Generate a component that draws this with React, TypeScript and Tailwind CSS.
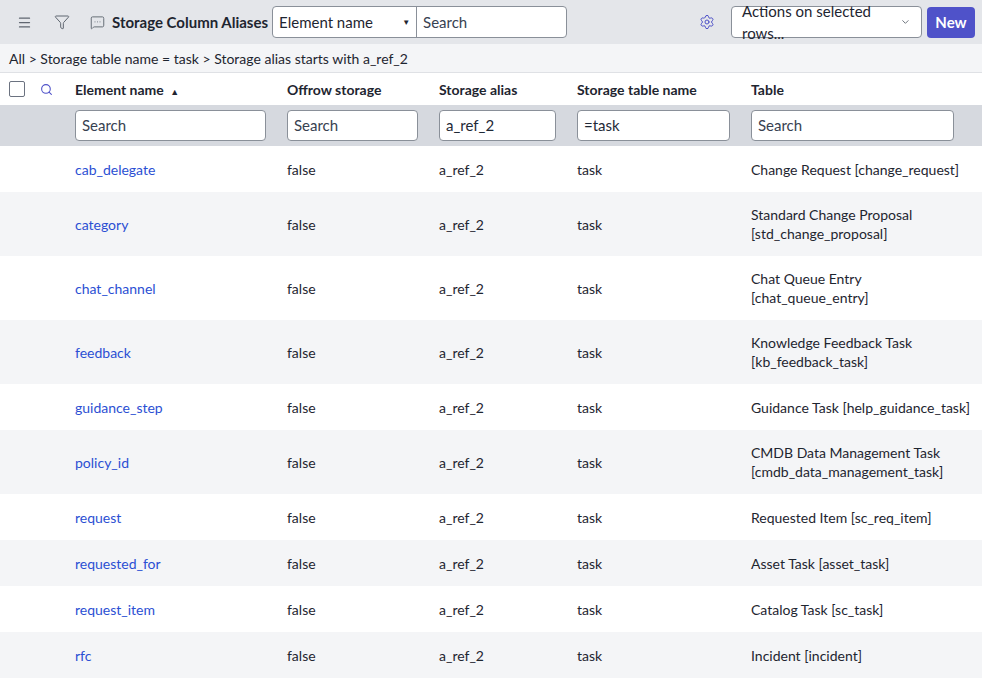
import { Menu, Filter, MessageSquareMore, Search, Settings, ChevronDown } from "lucide-react";

const rows: [string, string, string?][] = [
  ["cab_delegate", "Change Request [change_request]"],
  ["category", "Standard Change Proposal", "[std_change_proposal]"],
  ["chat_channel", "Chat Queue Entry", "[chat_queue_entry]"],
  ["feedback", "Knowledge Feedback Task", "[kb_feedback_task]"],
  ["guidance_step", "Guidance Task [help_guidance_task]"],
  ["policy_id", "CMDB Data Management Task", "[cmdb_data_management_task]"],
  ["request", "Requested Item [sc_req_item]"],
  ["requested_for", "Asset Task [asset_task]"],
  ["request_item", "Catalog Task [sc_task]"],
  ["rfc", "Incident [incident]"],
];

const grid = "grid grid-cols-[75px_212px_152px_138px_174px_1fr] items-center";

function FilterInput({ value, dark }: { value: string; dark?: boolean }) {
  return (
    <div className="pr-[21px]">
      <div className={`h-[31px] border border-[#8a9099] rounded-[4px] bg-white px-[6px] flex items-center text-[15px] ${dark ? "text-[#1f2937]" : "text-[#374151]"}`}>
        {value}
      </div>
    </div>
  );
}

export default function App() {
  return (
    <div className="w-[982px] h-[678px] overflow-hidden bg-white text-[#1e2530]" style={{ fontFamily: "Lato, 'Liberation Sans', sans-serif" }}>
      <div className="h-[44px] bg-[#e4e6ea] flex items-center pl-[17px] pr-[7px]">
        <Menu size={15} className="text-[#5f6670]" />
        <Filter size={16} className="ml-[22px] text-[#5f6670]" strokeWidth={1.5} />
        <MessageSquareMore size={15} className="ml-[20px] text-[#5f6670]" strokeWidth={1.5} />
        <span className="ml-[7px] font-bold text-[15px]">Storage Column Aliases</span>
        <div className="ml-[4px] flex h-[32px] border border-[#8a9099] rounded-[4px] bg-white text-[15px]">
          <div className="w-[144px] flex items-center justify-between px-[6px] border-r border-[#8a9099]">
            Element name <span className="text-[8px]">▼</span>
          </div>
          <div className="w-[149px] flex items-center px-[6px] text-[#374151]">Search</div>
        </div>
        <div className="flex-1" />
        <Settings size={16} className="text-[#4f52c9]" strokeWidth={1.5} />
        <div className="ml-[16px] w-[191px] h-[32px] border border-[#8a9099] rounded-[4px] bg-white flex items-center justify-between px-[10px] text-[15px]">
          Actions on selected rows... <ChevronDown size={12} className="text-[#5f6670]" />
        </div>
        <div className="ml-[5px] w-[48px] h-[31px] rounded-[4px] bg-[#4f52c9] text-white font-bold text-[15px] flex items-center justify-center">New</div>
      </div>
      <div className="h-[29px] bg-[#f4f5f7] flex items-center px-[9px] text-[14px] border-b border-[#dfe1e5]">
        All &gt; Storage table name = task &gt; Storage alias starts with a_ref_2
      </div>
      <div className={`${grid} h-[32px] font-bold text-[14px]`}>
        <div className="flex items-center pl-[9px] gap-[15px]">
          <div className="w-[16px] h-[16px] border border-[#6b7280] rounded-[2px]" />
          <Search size={13} className="text-[#4f52c9]" />
        </div>
        <div>Element name <span className="text-[9px] ml-[3px]">▲</span></div>
        <div>Offrow storage</div>
        <div>Storage alias</div>
        <div>Storage table name</div>
        <div>Table</div>
      </div>
      <div className={`${grid} h-[41px] bg-[#d6d9df]`}>
        <div />
        <FilterInput value="Search" />
        <FilterInput value="Search" />
        <FilterInput value="a_ref_2" dark />
        <FilterInput value="=task" dark />
        <div className="pr-[7px]"><FilterInput value="Search" /></div>
      </div>
      {rows.map(([name, t1, t2], i) => (
        <div key={name} className={`${grid} text-[14px] ${t2 ? "h-[64px]" : "h-[46px]"} ${i % 2 ? "bg-[#f4f5f7]" : "bg-white"}`}>
          <div />
          <div className="text-[#2b4fd3]">{name}</div>
          <div>false</div>
          <div>a_ref_2</div>
          <div>task</div>
          <div className="leading-[19px]">
            <div>{t1}</div>
            {t2 && <div>{t2}</div>}
          </div>
        </div>
      ))}
    </div>
  );
}
